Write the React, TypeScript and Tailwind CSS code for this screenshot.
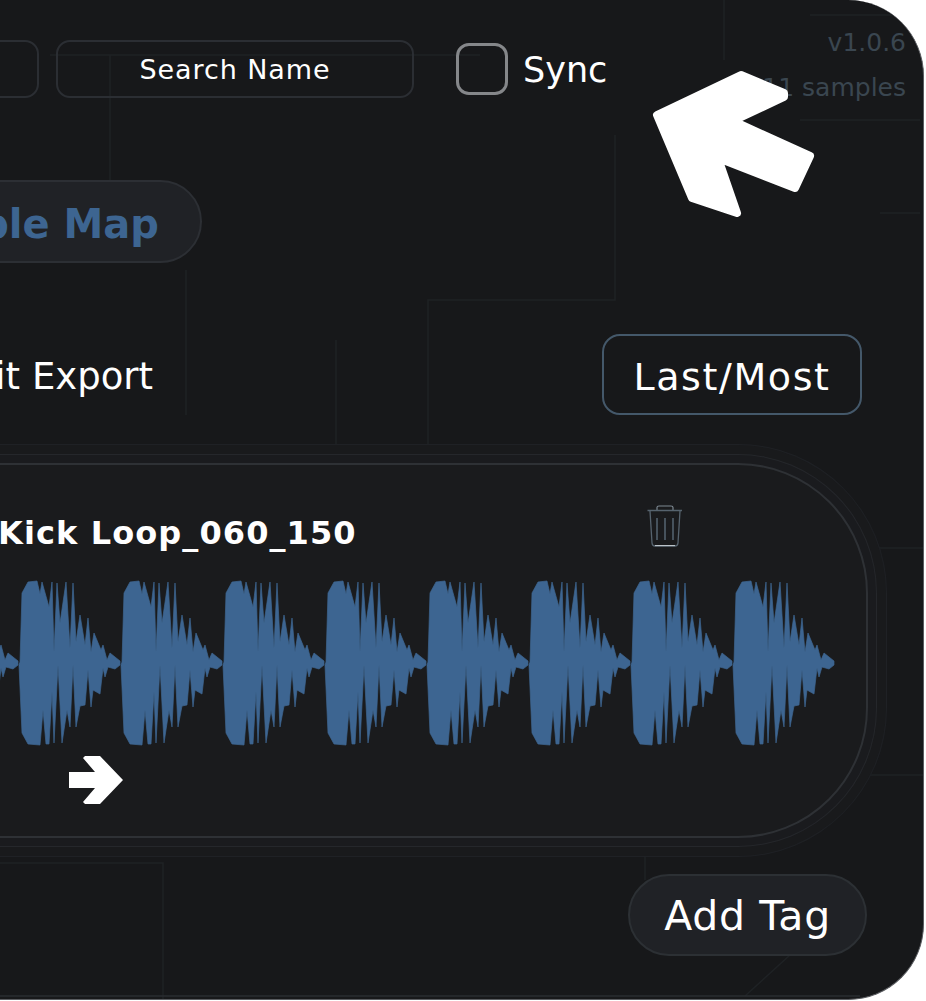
const font = "font-['DejaVu_Sans',sans-serif]";

const BURST =
  "20,92 22,23 28,12 37,11 40,24 42,12 49,37 52,12 54,82 57,13 60,53 66,12 70,78 73,13 76,72 80,45 85,75 88,48 91,82 94,63 101,80 103,75 107,90 110,83 120,91 120,95 115,99 108,97 105,107 103,98 100,124 93,120 91,137 88,100 85,135 80,136 76,157 73,95 70,157 67,140 62,173 58,95 54,173 52,122 49,174 46,174 43,140 40,175 28,174 22,163 19,95";

const BURST_OFFSETS = [-102, 0, 102, 204, 306, 408, 510, 612, 714];

function Waveform() {
  return (
    <svg viewBox="0 0 868 163" className="w-[868px] h-[163px] overflow-visible">
      {BURST_OFFSETS.map((dx) => (
        <polygon
          key={dx}
          points={BURST}
          fill="#3d6591"
          stroke="#3d6591"
          strokeWidth="0.7"
          strokeLinejoin="round"
          transform={`translate(${dx} -11)`}
        />
      ))}
    </svg>
  );
}

function Trash() {
  return (
    <svg viewBox="0 0 36 42" className="w-[36px] h-[42px]" fill="none">
      <path d="M10 5 V2.5 Q10 1 12 1 H24 Q26 1 26 2.5 V5" stroke="#7d8992" strokeWidth="1.2" />
      <path d="M0.5 5.5 H35" stroke="#56636e" strokeWidth="1.4" />
      <path d="M3 6 L5 38 Q5.2 41 8 41 H28 Q30.8 41 31 38 L33 6" stroke="#56636e" strokeWidth="1.3" />
      <path d="M8 40.6 H28" stroke="#c9d0d6" strokeWidth="1" />
      <path d="M10 13 V35 M18 13 V35 M26 13 V35" stroke="#46525c" strokeWidth="2" />
    </svg>
  );
}

// faint circuit traces behind the panel content
function Traces() {
  return (
    <svg viewBox="0 0 926 1001" className="absolute inset-0 w-[926px] h-[1001px]" fill="none" stroke="#1f2225" strokeWidth="1.5">
      <path d="M50 55 H480" />
      <path d="M110 55 V180" />
      <path d="M724 0 V60" />
      <path d="M615 135 V300 H428 V460" />
      <path d="M336 340 V460" />
      <path d="M186 270 V415" />
      <path d="M810 15 H900 M800 120 H920 M880 213 H920" />
      <path d="M870 548 H926 M870 775 H926" />
      <path d="M0 863 H163 V1000" />
      <path d="M645 838 V880" />
      <path d="M790 955 L745 996" />
      <path d="M0 996 H860" stroke="#2a2d31" />
    </svg>
  );
}

export default function App() {
  return (
    <div className="w-[926px] h-[1001px] bg-white overflow-hidden">
      <div className={`relative w-[924px] h-[1000px] bg-[#17181a] rounded-r-[76px] border-r border-b border-[#5a5c60] overflow-hidden ${font} text-white`}>
        <Traces />

        <div className="relative pt-[40px]">
          <div className="flex items-center h-[58px]">
            <div className="w-[139px] h-[58px] -ml-[100px] rounded-[14px] border-2 border-[#2b2e33]" />
            <div className="ml-[17px] w-[358px] h-[58px] pt-[3px] rounded-[14px] border-2 border-[#2b2e33] flex items-center justify-center text-[27px] tracking-[0.9px]">
              Search Name
            </div>
            <div className="ml-[42px] w-[52px] h-[52px] rounded-[13px] border-[3px] border-[#85878a]" />
            <span className="ml-[15px] text-[35px] pt-[2px]">Sync</span>
            <div className="ml-auto mr-[17px] -mt-[8px] flex flex-col items-end gap-[15px] text-[25px] leading-[30px] text-[#3a4650]">
              <span>v1.0.6</span>
              <span>11 samples</span>
            </div>
          </div>

          <div className="mt-[82px] flex">
            <div className="w-[401px] h-[83px] pt-[4px] -ml-[199px] rounded-[42px] bg-[#202226] border-2 border-[#2c2f34] flex items-center justify-end pr-[41px]">
              <span className="text-[40px] font-bold text-[#3d6591] whitespace-nowrap">Sample Map</span>
            </div>
          </div>

          <div className="mt-[71px] flex items-center h-[81px]">
            <span className="w-[153px] pt-[5px] flex justify-end text-[37px] whitespace-nowrap">Edit Export</span>
            <div className="ml-[449px] w-[260px] h-[81px] pt-[5px] rounded-[18px] border-2 border-[#44586a] flex items-center justify-center text-[38px] tracking-[1.6px]">
              Last/Most
            </div>
          </div>

          <div className="mt-[48px] -ml-[200px] w-[1068px] h-[375px] rounded-[130px] bg-[#1a1b1d] border-2 border-[#2e3135] shadow-[0_0_0_8px_#1a1b1e,0_0_0_9px_#25272b,0_0_0_18px_#191a1c,0_0_0_19px_#1f2125] pl-[198px] pt-[40px]">
            <div className="flex items-start">
              <span className="mt-[9px] -ml-[2px] text-[32px] leading-[38px] font-bold tracking-[1.1px] whitespace-nowrap">Kick Loop_060_150</span>
              <div className="ml-auto mr-[183px]">
                <Trash />
              </div>
            </div>
            <div className="mt-[29px]">
              <Waveform />
            </div>
            <svg viewBox="0 0 55 48" className="mt-[12px] ml-[68px] w-[55px] h-[48px]">
              <path d="M1 16 H27 L15 2 L17 0 H32 L55 24 L32 48 H17 L15 46 L27 32 H1 Z" fill="#ffffff" />
            </svg>
          </div>

          <div className="mt-[36px] flex justify-end pr-[56px]">
            <div className="w-[239px] h-[82px] pt-[4px] rounded-[41px] bg-[#202226] border-2 border-[#2c3034] flex items-center justify-center text-[41px] tracking-[0.7px]">
              Add Tag
            </div>
          </div>
        </div>

        {/* big pointer drawn over the corner */}
        <svg viewBox="0 0 926 1001" className="absolute inset-0 w-[926px] h-[1001px]">
          <path
            d="M741 75 L784 93 L784 97 L733 121 L810 156 L795 188 L718 158 L737 213 L692 198 L657 115 Z"
            fill="#ffffff"
            stroke="#ffffff"
            strokeWidth="8"
            strokeLinejoin="round"
          />
        </svg>
      </div>
    </div>
  );
}
